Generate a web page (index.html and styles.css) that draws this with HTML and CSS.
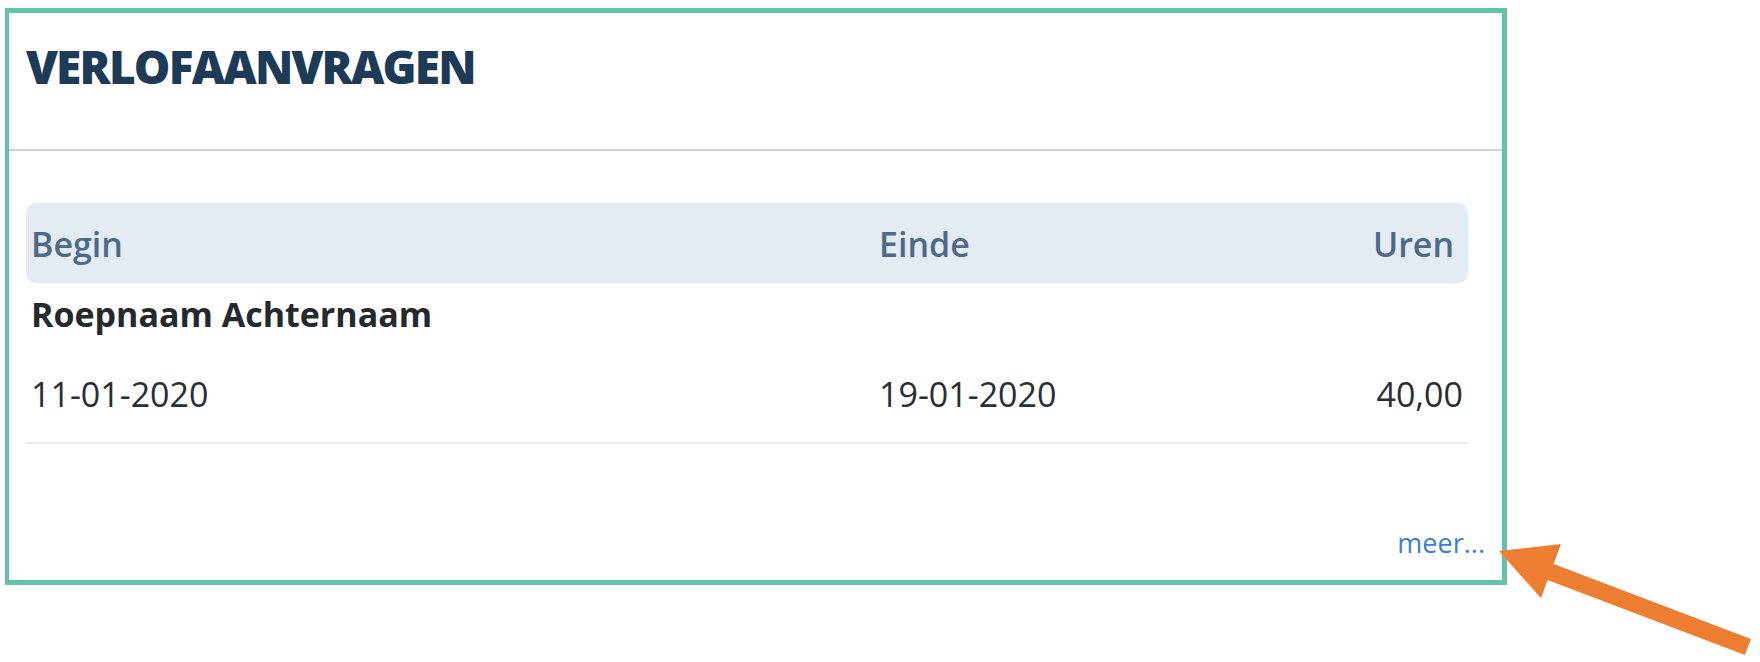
FILE: index.html
```html
<!DOCTYPE html>
<html lang="nl">
<head>
  <meta charset="UTF-8" />
  <meta name="viewport" content="width=device-width, initial-scale=1.0"/>
  <title>Verlofaanvragen</title>
  <link rel="stylesheet" href="styles.css">
</head>
<body>
  <div class="card">
    <div class="card-header">
      <h1>VERLOFAANVRAGEN</h1>
    </div>

    <div class="card-body">
      <div class="leave-table">
        <div class="row head">
          <span>Begin</span>
          <span>Einde</span>
          <span>Uren</span>
        </div>
        <div class="employee">Roepnaam Achternaam</div>
        <div class="row item">
          <span>11-01-2020</span>
          <span>19-01-2020</span>
          <span>40,00</span>
        </div>
      </div>
    </div>

    <div class="card-footer">
      <a href="#" class="more">meer...</a>
    </div>
  </div>

  <!-- annotatie pijl -->
  <svg class="pointer" width="1760" height="662" viewBox="0 0 1760 662">
    <line x1="1748" y1="647" x2="1548" y2="571" stroke="#ed7d31" stroke-width="17" />
    <polygon points="1499,551 1561,544 1541,598" fill="#ed7d31" />
  </svg>
</body>
</html>
```

FILE: styles.css
```css
body {
  margin: 0;
  background: #fff;
  font-family: 'Open Sans', 'Noto Sans', sans-serif;
  color: #2a2e33;
  position: relative;
  height: 662px;
  overflow: hidden;
}

.card {
  box-sizing: border-box;
  margin: 8px 0 0 5px;
  width: 1502px;
  height: 577px;
  border: 5px solid #62c3ab;
  border-left-width: 4px;
  display: flex;
  flex-direction: column;
}

.card-header {
  padding: 29px 17px 59px;
  border-bottom: 2px solid #cad3dc;
}

h1 {
  margin: 0;
  font-size: 46px;
  line-height: 48px;
  font-weight: 800;
  letter-spacing: -1.8px;
  color: #1d3a57;
}

.card-body {
  padding: 52px 17px 0;
}

.leave-table {
  width: 1442px;
}

.row {
  display: grid;
  grid-template-columns: 848px 1fr auto;
  padding: 0 14px 0 5px;
}

.row.head {
  background-color: #e4ebf3;
  border-radius: 10px;
  padding-top: 3px;
  line-height: 77px;
  font-size: 34px;
  font-weight: 600;
  color: #4d6a88;
}

.employee {
  padding: 11px 5px 0;
  font-size: 34px;
  line-height: 40px;
  font-weight: 700;
  color: #25282c;
}

.row.item {
  margin-top: 40px;
  padding-right: 5px;
  padding-bottom: 28px;
  font-size: 34px;
  line-height: 40px;
  border-bottom: 2px solid #e9ecef;
}

.card-footer {
  margin-top: auto;
  padding: 0 17px 22px;
  text-align: right;
}

.more {
  font-size: 27px;
  line-height: 30px;
  color: #3b80d2;
  text-decoration: none;
}

.pointer {
  position: absolute;
  left: 0;
  top: 0;
}
```
